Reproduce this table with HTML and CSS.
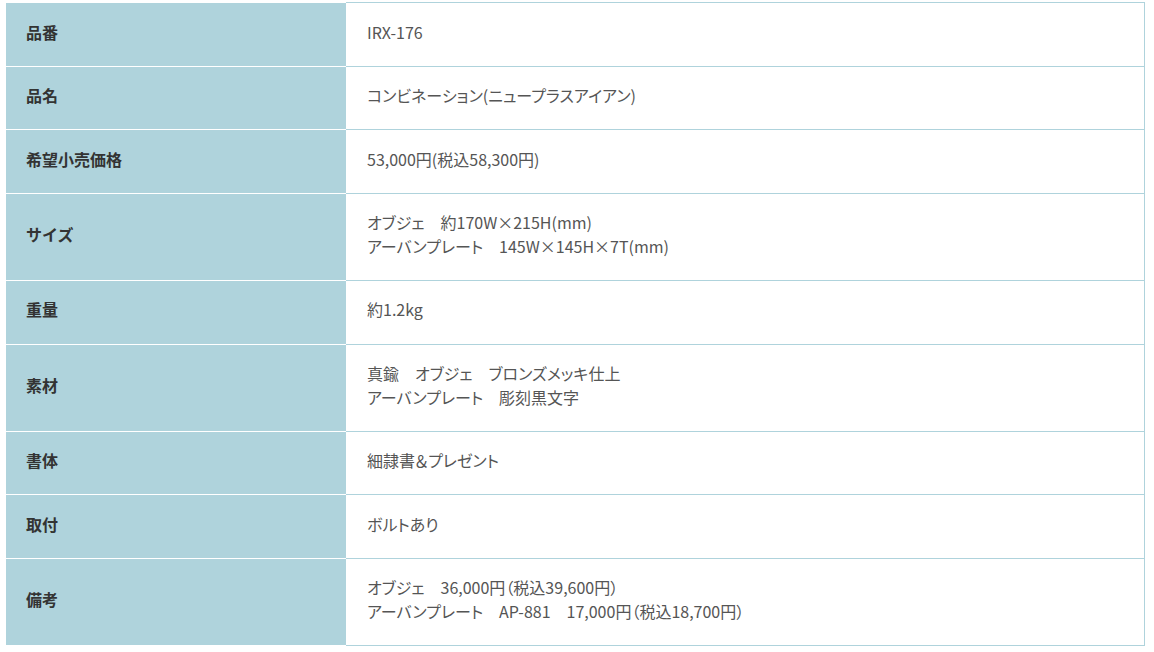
FILE: index.html
```html
<!DOCTYPE html>
<html lang="ja">
<head>
<meta charset="utf-8">
<title>仕様</title>
<link rel="stylesheet" href="styles.css">
</head>
<body>
<table class="spec">
  <tbody>
    <tr><th>品番</th><td>IRX-176</td></tr>
    <tr><th>品名</th><td>コンビネーション(ニュープラスアイアン)</td></tr>
    <tr><th>希望小売価格</th><td>53,000円(税込58,300円)</td></tr>
    <tr><th>サイズ</th><td>オブジェ　約170W×215H(mm)<br>アーバンプレート　145W×145H×7T(mm)</td></tr>
    <tr><th>重量</th><td>約1.2kg</td></tr>
    <tr><th>素材</th><td>真鍮　オブジェ　ブロンズメッキ仕上<br>アーバンプレート　彫刻黒文字</td></tr>
    <tr><th>書体</th><td>細隷書＆プレゼント</td></tr>
    <tr><th>取付</th><td>ボルトあり</td></tr>
    <tr><th>備考</th><td>オブジェ　36,000円（税込39,600円）<br>アーバンプレート　AP-881　17,000円（税込18,700円）</td></tr>
  </tbody>
</table>
</body>
</html>
```

FILE: styles.css
```css
html, body {
  margin: 0;
  padding: 0;
  background: #ffffff;
}

body {
  font-family: "Noto Sans CJK JP", "Noto Sans", sans-serif;
  font-size: 16px;
  line-height: 23.6px;
  color: #555555;
}

.spec {
  margin: 2px 0 0 6px;
  width: 1139px;
  border-collapse: separate;
  border-spacing: 0;
  table-layout: fixed;
}

.spec th {
  width: 340px;
  box-sizing: border-box;
  background: #afd3dc;
  color: #333333;
  font-weight: bold;
  text-align: left;
  vertical-align: middle;
  padding: 17.5px 20px 21.5px;
  border-bottom: 1px solid #ffffff;
}

.spec td {
  text-align: left;
  vertical-align: middle;
  padding: 17.5px 20px 21.5px 21px;
  border-bottom: 1px solid #afd3dc;
  border-right: 1px solid #afd3dc;
  font-feature-settings: "palt";
}

.spec tr:first-child td {
  border-top: 1px solid #afd3dc;
}

.spec tr:first-child th {
  border-top: 1px solid #ffffff;
}
```
